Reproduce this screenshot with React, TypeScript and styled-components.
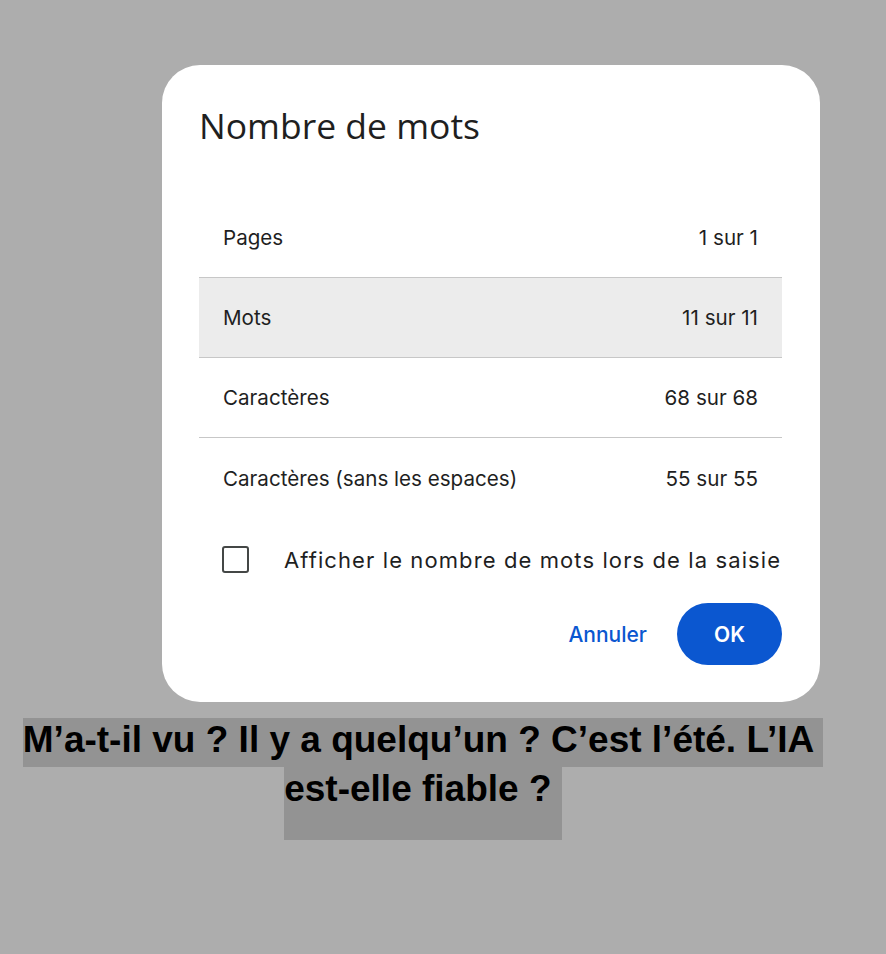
import styled, { createGlobalStyle } from "styled-components";

const GlobalStyle = createGlobalStyle`
  html, body {
    margin: 0;
    padding: 0;
    background: #adadad;
  }
`;

const Page = styled.div`
  width: 886px;
  min-height: 954px;
  padding-top: 65px;
  box-sizing: border-box;
  background: #adadad;
`;

const Dialog = styled.div`
  width: 658px;
  height: 637px;
  margin-left: 162px;
  box-sizing: border-box;
  padding: 36px 38px 37px 37px;
  background: #ffffff;
  border-radius: 38px;
  display: flex;
  flex-direction: column;
`;

const Title = styled.h1`
  margin: 0 0 49px 0;
  font-family: "Open Sans", sans-serif;
  font-weight: 400;
  font-size: 35.5px;
  line-height: 48px;
  color: #1f1f1f;
`;

const StatList = styled.div`
  display: flex;
  flex-direction: column;
`;

const StatRow = styled.div<{ $active?: boolean; $last?: boolean }>`
  height: 80px;
  box-sizing: border-box;
  padding: 0 24px;
  display: flex;
  align-items: center;
  justify-content: space-between;
  font-family: Inter, sans-serif;
  font-size: 20.6px;
  color: #1f1f1f;
  background: ${(p) => (p.$active ? "#ececec" : "transparent")};
  border-bottom: ${(p) => (p.$last ? "none" : "1px solid #c7c7c7")};
`;

const CheckRow = styled.label`
  margin-top: 28px;
  display: flex;
  align-items: center;
  gap: 35px;
  padding-left: 23px;
  font-family: Inter, sans-serif;
  font-size: 22px;
  letter-spacing: 1.1px;
  color: #1f1f1f;
`;

const Box = styled.span`
  width: 27px;
  height: 27px;
  box-sizing: border-box;
  border: 2.5px solid #444746;
  border-radius: 3px;
  flex-shrink: 0;
`;

const Actions = styled.div`
  margin-top: auto;
  display: flex;
  justify-content: flex-end;
  align-items: center;
  gap: 30px;
`;

const TextButton = styled.button`
  border: none;
  background: none;
  padding: 0;
  font-family: Inter, sans-serif;
  font-weight: 500;
  font-size: 21px;
  color: #0b57d0;
`;

const PrimaryButton = styled.button`
  width: 105px;
  height: 62px;
  border: none;
  border-radius: 31px;
  background: #0b57d0;
  color: #ffffff;
  font-family: Inter, sans-serif;
  font-weight: 600;
  font-size: 21px;
`;

const Caption = styled.div`
  width: 846px;
  margin-top: 16px;
  text-align: center;
  font-family: "Liberation Sans", Arial, sans-serif;
  font-weight: 700;
  font-size: 37px;
  color: #000000;
`;

const CaptionLine = styled.div<{ $tall?: boolean }>`
  display: inline-block;
  vertical-align: top;
  background: #939393;
  line-height: 44px;
  height: ${(p) => (p.$tall ? "73px" : "49px")};
  white-space: pre;
`;

const stats = [
  { label: "Pages", value: "1 sur 1" },
  { label: "Mots", value: "11 sur 11" },
  { label: "Caractères", value: "68 sur 68" },
  { label: "Caractères (sans les espaces)", value: "55 sur 55" },
];

export default function App() {
  return (
    <Page>
      <GlobalStyle />
      <Dialog>
        <Title>Nombre de mots</Title>
        <StatList>
          {stats.map((s, i) => (
            <StatRow key={s.label} $active={i === 1} $last={i === stats.length - 1}>
              <span>{s.label}</span>
              <span>{s.value}</span>
            </StatRow>
          ))}
        </StatList>
        <CheckRow>
          <Box />
          <span>Afficher le nombre de mots lors de la saisie</span>
        </CheckRow>
        <Actions>
          <TextButton>Annuler</TextButton>
          <PrimaryButton>OK</PrimaryButton>
        </Actions>
      </Dialog>
      <Caption>
        <CaptionLine>M’a-t-il vu ? Il y a quelqu’un ? C’est l’été. L’IA </CaptionLine>
        <br />
        <CaptionLine $tall>est-elle fiable ? </CaptionLine>
      </Caption>
    </Page>
  );
}
